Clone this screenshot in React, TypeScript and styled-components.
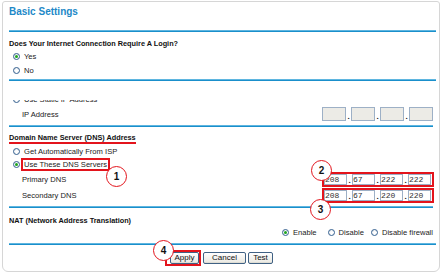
import React from 'react'
import styled, { createGlobalStyle, css } from 'styled-components'

const GlobalStyle = createGlobalStyle`
  html, body {
    margin: 0;
    padding: 0;
    background: #ffffff;
  }
  body {
    font-family: "Liberation Sans", Arial, sans-serif;
    color: #1e1e1e;
  }
`

const RED = '#e3141c'
const BLUE = '#1a8fcb'

const Panel = styled.div`
  position: relative;
  box-sizing: border-box;
  margin: 1px 0 0 2px;
  width: 438px;
  height: 271px;
  border: 1px solid #d6d6d6;
  border-radius: 3px 3px 6px 6px;
  padding: 0 3px 0 6px;
  display: flex;
  flex-direction: column;
`

const Title = styled.h1`
  margin: 0;
  box-sizing: border-box;
  height: 28px;
  padding-top: 4px;
  font-size: 10px;
  line-height: 12px;
  font-weight: bold;
  color: #1d88c7;
`

const Divider = styled.div<{ $top?: number; $inset?: number }>`
  flex: none;
  height: 2px;
  margin-top: ${(p) => p.$top ?? 0}px;
  margin-right: ${(p) => p.$inset ?? 0}px;
  background: ${BLUE};
  border-top: 1px solid #5fb6e0;
  box-sizing: border-box;
`

const Row = styled.div<{ $h: number; $top?: number; $indent?: number; $right?: boolean }>`
  flex: none;
  display: flex;
  align-items: center;
  height: ${(p) => p.$h}px;
  margin-top: ${(p) => p.$top ?? 0}px;
  padding-left: ${(p) => p.$indent ?? 0}px;
  ${(p) =>
    p.$right &&
    css`
      justify-content: flex-end;
      padding-right: 3px;
    `}
`

const Heading = styled.span<{ $underline?: boolean }>`
  font-size: 7.3px;
  font-weight: bold;
  color: #111;
  white-space: nowrap;
  ${(p) =>
    p.$underline &&
    css`
      display: inline-block;
      line-height: 9px;
      border-bottom: 2px solid ${RED};
    `}
`

const Label = styled.span`
  font-size: 7.6px;
  color: #222;
  white-space: nowrap;
`

const FieldLabel = styled(Label)`
  flex: 1;
  padding-left: 13px;
`

const RadioDot = styled.span<{ $checked?: boolean }>`
  flex: none;
  box-sizing: border-box;
  width: 7px;
  height: 7px;
  margin-right: 4px;
  border-radius: 50%;
  border: 1px solid #34608f;
  background: radial-gradient(circle at 60% 60%, #ffffff 30%, #d9dee4 100%);
  display: flex;
  align-items: center;
  justify-content: center;
  &::after {
    content: '';
    display: ${(p) => (p.$checked ? 'block' : 'none')};
    width: 3px;
    height: 3px;
    border-radius: 50%;
    background: #1ea51e;
  }
`

const Option = styled.span<{ $gap?: number }>`
  display: inline-flex;
  align-items: center;
  margin-left: ${(p) => p.$gap ?? 0}px;
`

const Radio = ({ label, checked, gap }: { label: React.ReactNode; checked?: boolean; gap?: number }) => (
  <Option $gap={gap}>
    <RadioDot $checked={checked} />
    {label}
  </Option>
)

// the reference shows only the lower edge of this scrolled-away option
const Clip = styled.div`
  flex: none;
  height: 4px;
  margin-top: 19px;
  overflow: hidden;
`

const ClipInner = styled.div`
  margin-top: -8px;
`

const Highlight = styled.span`
  display: inline-flex;
  align-items: center;
  box-sizing: border-box;
  height: 11px;
  margin-left: -2px;
  padding: 0 1px;
  border: 1px solid ${RED};
  outline: 0.5px solid ${RED};
`

const IpGroup = styled.div<{ $marked?: boolean }>`
  display: flex;
  align-items: stretch;
  box-sizing: border-box;
  margin-right: 2px;
  ${(p) =>
    p.$marked
      ? css`
          height: 15px;
          border: 2px solid ${RED};
          padding: 0 1px 0 0;
        `
      : css`
          height: 14px;
          margin-right: 3px;
        `}
`

const Octet = styled.span<{ $disabled?: boolean }>`
  box-sizing: border-box;
  width: ${(p) => (p.$disabled ? 24 : 23)}px;
  border: 1px solid #9db0c6;
  background: ${(p) => (p.$disabled ? '#ecebe6' : '#ffffff')};
  font-family: "Liberation Mono", "Courier New", monospace;
  font-size: 8px;
  line-height: 9px;
  color: #333;
  display: flex;
  align-items: center;
`

const Dot = styled.span`
  width: 5px;
  display: flex;
  align-items: flex-end;
  justify-content: center;
  font-size: 8px;
  font-weight: bold;
  line-height: 9px;
  color: #111;
`

const IpField = ({ values, marked, disabled }: { values: string[]; marked?: boolean; disabled?: boolean }) => (
  <IpGroup $marked={marked}>
    {values.map((v, i) => (
      <React.Fragment key={i}>
        {i > 0 && <Dot>.</Dot>}
        <Octet $disabled={disabled}>{v}</Octet>
      </React.Fragment>
    ))}
  </IpGroup>
)

const ButtonBar = styled.div`
  flex: none;
  display: flex;
  justify-content: center;
  align-items: center;
  gap: 2px;
  height: 16px;
  margin-top: 5px;
  padding-right: 7px;
`

const ButtonMark = styled.span`
  box-sizing: border-box;
  display: flex;
  align-items: center;
  height: 16px;
  padding-left: 3px;
  border: 2px solid ${RED};
`

const Button = styled.button<{ $w: number }>`
  box-sizing: border-box;
  width: ${(p) => p.$w}px;
  height: 12px;
  padding: 0;
  border: 1px solid #3f6184;
  border-radius: 2px;
  background: linear-gradient(#ffffff, #ecebe5 85%, #d8d6cc);
  font-family: "Liberation Sans", Arial, sans-serif;
  font-size: 8px;
  line-height: 10px;
  color: #111;
`

const Badge = styled.span<{ $x: number; $y: number }>`
  position: absolute;
  left: ${(p) => p.$x}px;
  top: ${(p) => p.$y}px;
  box-sizing: border-box;
  width: 21px;
  height: 21px;
  border-radius: 50%;
  border: 1.5px solid ${RED};
  background: #ffffff;
  display: flex;
  align-items: center;
  justify-content: center;
  font-size: 10px;
  font-weight: bold;
  color: #111;
`

export default function App() {
  return (
    <>
      <GlobalStyle />
      <Panel>
        <Title>Basic Settings</Title>
        <Divider />

        <Row $h={14} $top={4}>
          <Heading>Does Your Internet Connection Require A Login?</Heading>
        </Row>
        <Row $h={13} $indent={4}>
          <Radio checked label={<Label>Yes</Label>} />
        </Row>
        <Row $h={14} $indent={4}>
          <Radio label={<Label>No</Label>} />
        </Row>
        <Divider $top={2} />

        <Clip>
          <ClipInner>
            <Row $h={14} $indent={4}>
              <Radio label={<Label>Use Static IP Address</Label>} />
            </Row>
          </ClipInner>
        </Clip>
        <Row $h={14} $top={3}>
          <FieldLabel>IP Address</FieldLabel>
          <IpField disabled values={['', '', '', '']} />
        </Row>
        <Divider $top={4} $inset={3} />

        <Row $h={11} $top={6}>
          <Heading $underline>Domain Name Server (DNS) Address</Heading>
        </Row>
        <Row $h={14} $indent={4}>
          <Radio label={<Label>Get Automatically From ISP</Label>} />
        </Row>
        <Row $h={13} $indent={4}>
          <Radio
            checked
            label={
              <Highlight>
                <Label>Use These DNS Servers</Label>
              </Highlight>
            }
          />
        </Row>
        <Row $h={16}>
          <FieldLabel>Primary DNS</FieldLabel>
          <IpField marked values={['208', '67', '222', '222']} />
        </Row>
        <Row $h={16}>
          <FieldLabel>Secondary DNS</FieldLabel>
          <IpField marked values={['208', '67', '220', '220']} />
        </Row>
        <Divider $top={3} $inset={3} />

        <Row $h={14} $top={5}>
          <Heading>NAT (Network Address Translation)</Heading>
        </Row>
        <Row $h={10} $right>
          <Radio checked label={<Label>Enable</Label>} />
          <Radio gap={11} label={<Label>Disable</Label>} />
          <Radio gap={7} label={<Label>Disable firewall</Label>} />
        </Row>
        <Divider $top={6} />

        <ButtonBar>
          <ButtonMark>
            <Button $w={29}>Apply</Button>
          </ButtonMark>
          <Button $w={43}>Cancel</Button>
          <Button $w={25}>Test</Button>
        </ButtonBar>

        <Badge $x={103} $y={164}>1</Badge>
        <Badge $x={308} $y={158}>2</Badge>
        <Badge $x={307} $y={197}>3</Badge>
        <Badge $x={150} $y={238}>4</Badge>
      </Panel>
    </>
  )
}
